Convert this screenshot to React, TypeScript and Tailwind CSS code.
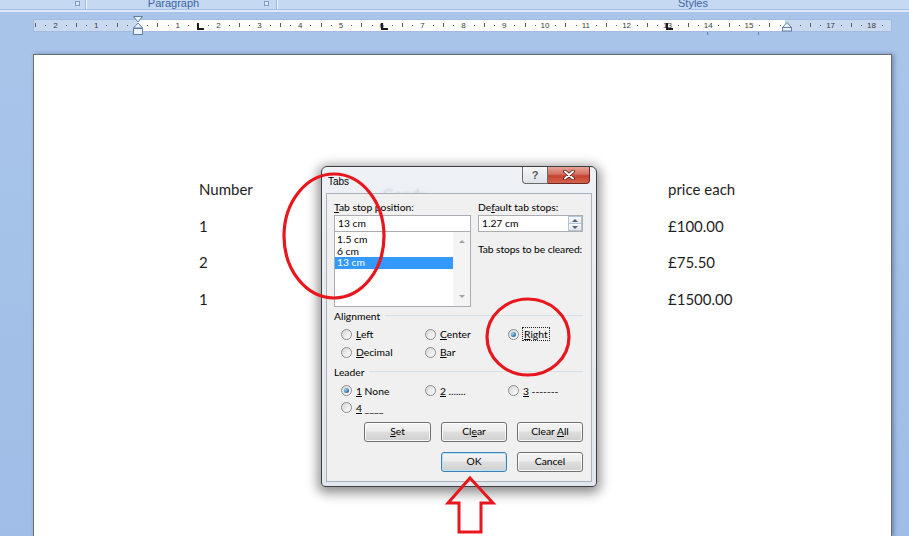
import React from "react";

// Word 2007 document with the Tabs dialog open, plus red annotations

const CM = 40.8;
const RULER_ZERO = 103; // px from the ruler's inner left edge to 0 cm

type Mark = { x: number; kind: "num" | "half" | "dot"; label?: string };

function rulerMarks(): Mark[] {
  const marks: Mark[] = [];
  for (let q = -10; q <= 74; q++) {
    const v = q / 4;
    const x = RULER_ZERO + v * CM;
    if (x < 1 || x > 856) continue;
    if (q % 4 === 0) {
      if (v === 0 || v === 16) continue;
      marks.push({ x, kind: "num", label: String(Math.abs(v)) });
    } else if (q % 2 === 0) {
      marks.push({ x, kind: "half" });
    } else {
      marks.push({ x, kind: "dot" });
    }
  }
  return marks;
}

const tabStops = [1.5, 6, 13];

function RibbonStrip() {
  return (
    <>
      <div className="flex h-[10px] overflow-hidden border-b border-[#a7c1e4] bg-[#c5d9f2] font-['Liberation_Sans',sans-serif] text-[11px] text-[#3e66a3]">
        <div className="relative w-[85px]">
          <span className="absolute left-[75px] top-[1px] h-[5px] w-[5px] border border-[#7d9ccc] bg-[#dfeaf8]" />
        </div>
        <div className="w-[2px] border-l border-[#9ebade] bg-[#eef4fc]" />
        <div className="relative w-[189px]">
          <div className="-mt-[4px] pr-[16px] text-center leading-[14px]">Paragraph</div>
          <span className="absolute left-[177px] top-[1px] h-[5px] w-[5px] border border-[#7d9ccc] bg-[#dfeaf8]" />
        </div>
        <div className="w-[2px] border-l border-[#9ebade] bg-[#eef4fc]" />
        <div className="flex-1 pr-[6px]">
          <div className="-mt-[4px] pl-[400px] leading-[14px]">Styles</div>
        </div>
      </div>
      <div className="h-[2px] bg-[#dde9f7]" />
    </>
  );
}

function Ruler() {
  const marks = rulerMarks();
  return (
    <div className="relative ml-[33px] mt-[7px] flex h-[13px] w-[859px] border border-[#a3bbdf] font-['Liberation_Sans',sans-serif]">
      <div className="w-[103px] bg-[#c9d9ef]" />
      <div className="w-[648px] bg-white" />
      <div className="flex-1 bg-[#c9d9ef]" />

      {marks.map((m, i) =>
        m.kind === "num" ? (
          <span
            key={i}
            className="absolute top-[1px] -translate-x-1/2 text-[8px] leading-[9px] text-[#3b3b3b]"
            style={{ left: m.x }}
          >
            {m.label}
          </span>
        ) : m.kind === "half" ? (
          <span
            key={i}
            className="absolute top-[3px] h-[4px] w-px bg-[#5a5a5a]"
            style={{ left: m.x }}
          />
        ) : (
          <span
            key={i}
            className="absolute top-[5px] h-px w-px bg-[#5a5a5a]"
            style={{ left: m.x }}
          />
        )
      )}

      {tabStops.map((t) => (
        <span
          key={t}
          className="absolute top-[3px] h-[7px] w-[7px] border-b-2 border-l-2 border-[#1b1b1b]"
          style={{ left: RULER_ZERO + t * CM - 1 }}
        />
      ))}

      {/* first-line / hanging / left indent */}
      <svg className="absolute -top-[4px] left-[99px]" width="10" height="20" viewBox="0 0 10 20">
        <polygon points="0.5,0.5 9.5,0.5 5,6" fill="#eef3fa" stroke="#5f7fab" />
        <polygon points="5,7 9.5,12 0.5,12" fill="#eef3fa" stroke="#5f7fab" />
        <rect x="0.5" y="12.5" width="9" height="6" fill="#eef3fa" stroke="#5f7fab" />
      </svg>
      {/* right indent */}
      <svg className="absolute left-[748px] top-[2px]" width="10" height="10" viewBox="0 0 10 10">
        <polygon points="5,0.5 9.5,5.5 0.5,5.5" fill="#eef3fa" stroke="#5f7fab" />
        <rect x="0.5" y="5.5" width="9" height="3.5" fill="#eef3fa" stroke="#5f7fab" />
      </svg>

      <span className="absolute left-[673px] top-[12px] h-[3px] w-px bg-[#6d7f98]" />
      <span className="absolute left-[724px] top-[12px] h-[3px] w-px bg-[#6d7f98]" />
    </div>
  );
}

function Radio({ checked = false }: { checked?: boolean }) {
  return (
    <span className="flex h-[11px] w-[11px] shrink-0 items-center justify-center rounded-full border border-[#8b8c8c] bg-[linear-gradient(135deg,#d6d6d6,#ffffff)]">
      {checked && (
        <span className="h-[5px] w-[5px] rounded-full bg-[radial-gradient(circle_at_35%_35%,#a6d6f7,#2a68a8_70%,#1a4070)]" />
      )}
    </span>
  );
}

function Option({
  checked,
  focused,
  children,
}: {
  checked?: boolean;
  focused?: boolean;
  children: React.ReactNode;
}) {
  return (
    <div className="flex items-center gap-[4px]">
      <Radio checked={checked} />
      <span
        className={
          focused
            ? "px-px leading-[12px] outline-1 outline-dotted outline-[#222]"
            : "leading-[12px]"
        }
      >
        {children}
      </span>
    </div>
  );
}

function Button({
  primary,
  className,
  children,
}: {
  primary?: boolean;
  className?: string;
  children: React.ReactNode;
}) {
  return (
    <div
      className={
        "flex h-[20px] w-[66px] items-center justify-center rounded-[3px] border bg-[linear-gradient(to_bottom,#f4f4f4_0%,#ececec_45%,#dedede_50%,#d0d0d0_100%)] " +
        (primary
          ? "border-[#3c7fb1] shadow-[inset_0_0_0_1px_#b9e3f8] "
          : "border-[#707070] shadow-[inset_0_0_0_1px_rgba(255,255,255,0.85)] ") +
        (className ?? "")
      }
    >
      <span className="whitespace-pre">{children}</span>
    </div>
  );
}

function GroupHeader({ title }: { title: string }) {
  return (
    <div className="flex h-[14px] items-center gap-[5px]">
      <span className="leading-[14px]">{title}</span>
      <div className="h-[2px] flex-1 border-t border-[#d5dfe5] border-b-white" />
    </div>
  );
}

function TabsDialog() {
  return (
    <div className="absolute left-[321px] top-[166px] flex h-[321px] w-[276px] flex-col rounded-t-[6px] rounded-b-[4px] border border-[#3f3f3f] bg-[linear-gradient(to_bottom,#eef1f5,#e2e7ed)] px-[4px] pb-[4px] shadow-[0_3px_12px_3px_rgba(0,0,0,0.45)] font-['Lato',sans-serif] text-[10.3px] text-black">
      {/* title bar */}
      <div className="relative flex h-[26px] items-start overflow-hidden">
        <span className="absolute left-[57px] top-[16px] font-['Lato',sans-serif] text-[15px] text-black/15 blur-[1.2px]">
          Goods
        </span>
        <span className="ml-[2px] mt-[8px] font-['Liberation_Sans',sans-serif] text-[10px] leading-[14px]">
          Tabs
        </span>
        <div className="ml-auto mr-[2px] flex">
          <div className="flex h-[17px] w-[26px] items-center justify-center rounded-bl-[4px] border border-t-0 border-[#6a6a6a] bg-[linear-gradient(to_bottom,#f5f6f8,#dfe3e8)] font-['Liberation_Sans',sans-serif] text-[11px] font-bold text-[#5c5c5c]">
            ?
          </div>
          <div className="flex h-[17px] w-[42px] items-center justify-center rounded-br-[4px] border border-l-0 border-t-0 border-[#6a2a24] bg-[linear-gradient(to_bottom,#e6a497_0%,#d5705f_45%,#c44331_55%,#d7614b_100%)]">
            <svg width="12" height="10" viewBox="0 0 12 10">
              <path d="M2 1.5 L10 8.5 M10 1.5 L2 8.5" stroke="#4a1a14" strokeWidth="3.6" strokeLinecap="round" />
              <path d="M2 1.5 L10 8.5 M10 1.5 L2 8.5" stroke="#ffffff" strokeWidth="2" strokeLinecap="round" />
            </svg>
          </div>
        </div>
      </div>

      {/* client area */}
      <div className="flex-1 border border-[#a8b1bb] bg-[#f0f0f0] px-[7px] pt-[6px]">
        <div className="flex gap-[7px]">
          <div className="w-[137px]">
            <div className="leading-[14px]">
              <u className="underline-offset-1">T</u>ab stop position:
            </div>
            <div className="mt-px flex h-[17px] items-center border border-[#abadb3] bg-white pl-[3px]">
              13 cm
            </div>
            <div className="flex h-[75px] border border-t-0 border-[#abadb3] bg-white">
              <div className="flex-1 pt-[2px]">
                <div className="h-[11.5px] pl-[2px] leading-[11.5px]">1.5 cm</div>
                <div className="h-[11.5px] pl-[2px] leading-[11.5px]">6 cm</div>
                <div className="h-[11.5px] bg-[#3399ff] pl-[2px] leading-[11.5px] text-white">13 cm</div>
              </div>
              <div className="flex w-[17px] flex-col items-center justify-between bg-[#f4f4f4] py-[8px]">
                <span className="h-0 w-0 border-x-[3.5px] border-b-[3.5px] border-x-transparent border-b-[#a3a3a3]" />
                <span className="h-0 w-0 border-x-[3.5px] border-t-[3.5px] border-x-transparent border-t-[#a3a3a3]" />
              </div>
            </div>
          </div>
          <div className="w-[105px]">
            <div className="whitespace-nowrap leading-[14px]">
              De<u className="underline-offset-1">f</u>ault tab stops:
            </div>
            <div className="mt-px flex h-[17px] border border-[#abadb3] bg-white">
              <span className="flex flex-1 items-center pl-[3px]">1.27 cm</span>
              <div className="flex w-[14px] flex-col">
                <div className="flex flex-1 items-center justify-center border border-[#b4c4d9] bg-[linear-gradient(#fafafa,#e6e6e6)]">
                  <span className="h-0 w-0 border-x-[3px] border-b-[3px] border-x-transparent border-b-[#4d6185]" />
                </div>
                <div className="flex flex-1 items-center justify-center border border-t-0 border-[#b4c4d9] bg-[linear-gradient(#fafafa,#e6e6e6)]">
                  <span className="h-0 w-0 border-x-[3px] border-t-[3px] border-x-transparent border-t-[#4d6185]" />
                </div>
              </div>
            </div>
            <div className="mt-[10px] whitespace-nowrap leading-[14px] tracking-[-0.1px]">
              Tab stops to be cleared:
            </div>
          </div>
        </div>

        <div className="mt-[2px] pr-[1px]">
          <GroupHeader title="Alignment" />
        </div>
        <div className="mt-[2px] grid grid-cols-[84px_83px_1fr] auto-rows-[18px] items-center pl-[7px]">
          <Option>
            <u className="underline-offset-1">L</u>eft
          </Option>
          <Option>
            <u className="underline-offset-1">C</u>enter
          </Option>
          <Option checked focused>
            <u className="underline-offset-1">R</u>ight
          </Option>
          <Option>
            <u className="underline-offset-1">D</u>ecimal
          </Option>
          <Option>
            <u className="underline-offset-1">B</u>ar
          </Option>
        </div>

        <div className="mt-[4px] pr-[1px]">
          <GroupHeader title="Leader" />
        </div>
        <div className="mt-[3px] grid grid-cols-[84px_83px_1fr] auto-rows-[17px] items-center pl-[7px]">
          <Option checked>
            <u className="underline-offset-1">1</u> None
          </Option>
          <Option>
            <u className="underline-offset-1">2</u> .......
          </Option>
          <Option>
            <u className="underline-offset-1">3</u> -------
          </Option>
          <Option>
            <u className="underline-offset-1">4</u> ____
          </Option>
        </div>

        <div className="mt-[6px] flex justify-end gap-[10px] pr-px">
          <Button className="w-[67px]">
            <u className="underline-offset-1">S</u>et
          </Button>
          <Button>
            Cl<u className="underline-offset-1">e</u>ar
          </Button>
          <Button>
            Clear <u className="underline-offset-1">A</u>ll
          </Button>
        </div>
        <div className="mt-[10px] flex justify-end gap-[10px] pr-px">
          <Button primary>OK</Button>
          <Button>Cancel</Button>
        </div>
      </div>
    </div>
  );
}

function Annotations() {
  return (
    <svg className="pointer-events-none absolute inset-0" width="909" height="536" viewBox="0 0 909 536">
      <ellipse cx="334" cy="236" rx="50" ry="62" fill="none" stroke="#e8161d" strokeWidth="3.2" />
      <ellipse cx="528" cy="337" rx="41" ry="38" fill="none" stroke="#e8161d" strokeWidth="3.2" />
      <path
        d="M470 478 L448 503 L459 503 L459 532 L481 532 L481 503 L493 503 Z"
        fill="none"
        stroke="#e8161d"
        strokeWidth="3"
        strokeLinejoin="miter"
      />
    </svg>
  );
}

const rows = [
  ["Number", "price each"],
  ["1", "£100.00"],
  ["2", "£75.50"],
  ["1", "£1500.00"],
];

export default function App() {
  return (
    <div className="relative flex h-[536px] w-[909px] flex-col overflow-hidden bg-[linear-gradient(to_bottom,#a9c5ea,#9fbde6)]">
      <RibbonStrip />
      <Ruler />

      {/* page */}
      <div className="ml-[33px] mt-[22px] w-[859px] flex-1 border-x border-t border-[#6e6e6e] bg-white pl-[165px] pt-[116px] shadow-[2px_0_4px_rgba(50,70,110,0.45)] font-['Lato',sans-serif] text-[15px] text-[#1e1e1e]">
        <div className="grid grid-cols-[469px_auto] auto-rows-[36.7px] items-center">
          {rows.map(([a, b], i) => (
            <React.Fragment key={i}>
              <span>{a}</span>
              <span>{b}</span>
            </React.Fragment>
          ))}
        </div>
      </div>

      <TabsDialog />
      <Annotations />
    </div>
  );
}
